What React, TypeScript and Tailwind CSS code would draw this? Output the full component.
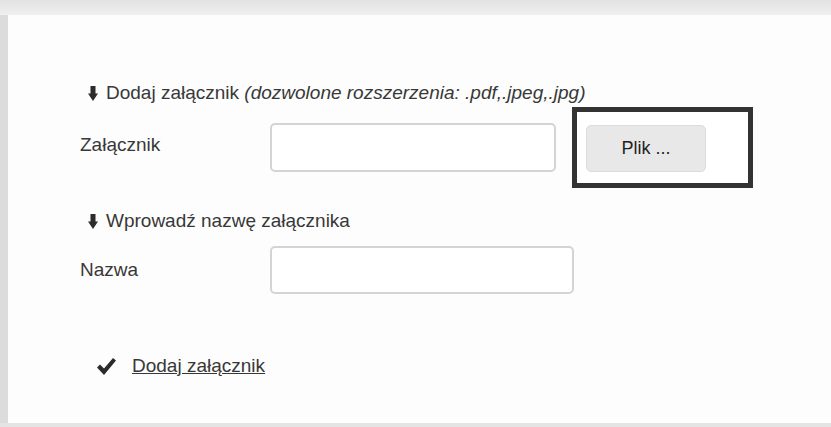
import React from "react";

const ArrowDown = () => (
  <svg width="10" height="15" viewBox="0 0 10 15" className="shrink-0">
    <path d="M2.5 0h5v7.5H10L5 15 0 7.5h2.5z" fill="#2b2b2b" />
  </svg>
);

const CheckMark = () => (
  <svg width="19" height="17" viewBox="0 0 19 17" className="shrink-0">
    <path d="M0 9.5 3 6.5l4 4L16 0l3 2.5L7 17z" fill="#2b2b2b" />
  </svg>
);

export default function App() {
  return (
    <div
      className="w-[831px] h-[427px] bg-[#e4e4e4] flex flex-col overflow-hidden text-[#383838] text-[19px]"
      style={{ fontFamily: '"Liberation Sans", Arial, sans-serif' }}
    >
      {/* top strip */}
      <div className="h-[15px] shrink-0 bg-gradient-to-b from-[#e2e2e2] to-[#f0f0f0] flex items-end">
        <div className="ml-[355px] mb-[-2px] h-[2px] w-[95px] bg-[#6a6a6a]/70" />
      </div>

      <div className="flex flex-1 pb-[4px]">
        <div className="w-[8px] shrink-0 bg-[#dcdcdc]" />
        <div className="flex-1 bg-[#fdfdfd] pl-[72px] pt-[67px]">
          <div className="flex items-center gap-[8px] pl-[8px] h-[22px]">
            <ArrowDown />
            <span>
              Dodaj załącznik <i>(dozwolone rozszerzenia: .pdf,.jpeg,.jpg)</i>
            </span>
          </div>

          <div className="flex items-center mt-[3px]">
            <label className="w-[190px] -mt-[4px]">Załącznik</label>
            <input
              type="text"
              className="w-[286px] h-[49px] rounded-[5px] border-2 border-[#d4d4d4] bg-white outline-none"
            />
            <div className="ml-[16px] w-[181px] h-[81px] border-[5px] border-[#333] bg-white pl-[9px] pt-[13px]">
              <button className="w-[120px] h-[47px] rounded-[5px] bg-[#e8e8e8] border border-[#dcdcdc] text-[#222] text-[18px] text-center">
                Plik ...
              </button>
            </div>
          </div>

          <div className="flex items-center gap-[8px] pl-[8px] h-[22px] mt-[22px]">
            <ArrowDown />
            <span>Wprowadź nazwę załącznika</span>
          </div>

          <div className="flex items-center mt-[14px]">
            <label className="w-[190px]">Nazwa</label>
            <input
              type="text"
              className="w-[304px] h-[48px] rounded-[5px] border-2 border-[#d4d4d4] bg-white outline-none"
            />
          </div>

          <div className="flex items-center gap-[16px] pl-[17px] h-[22px] mt-[61px]">
            <CheckMark />
            <a href="#" className="underline text-[#383838]">
              Dodaj załącznik
            </a>
          </div>
        </div>
      </div>
    </div>
  );
}
